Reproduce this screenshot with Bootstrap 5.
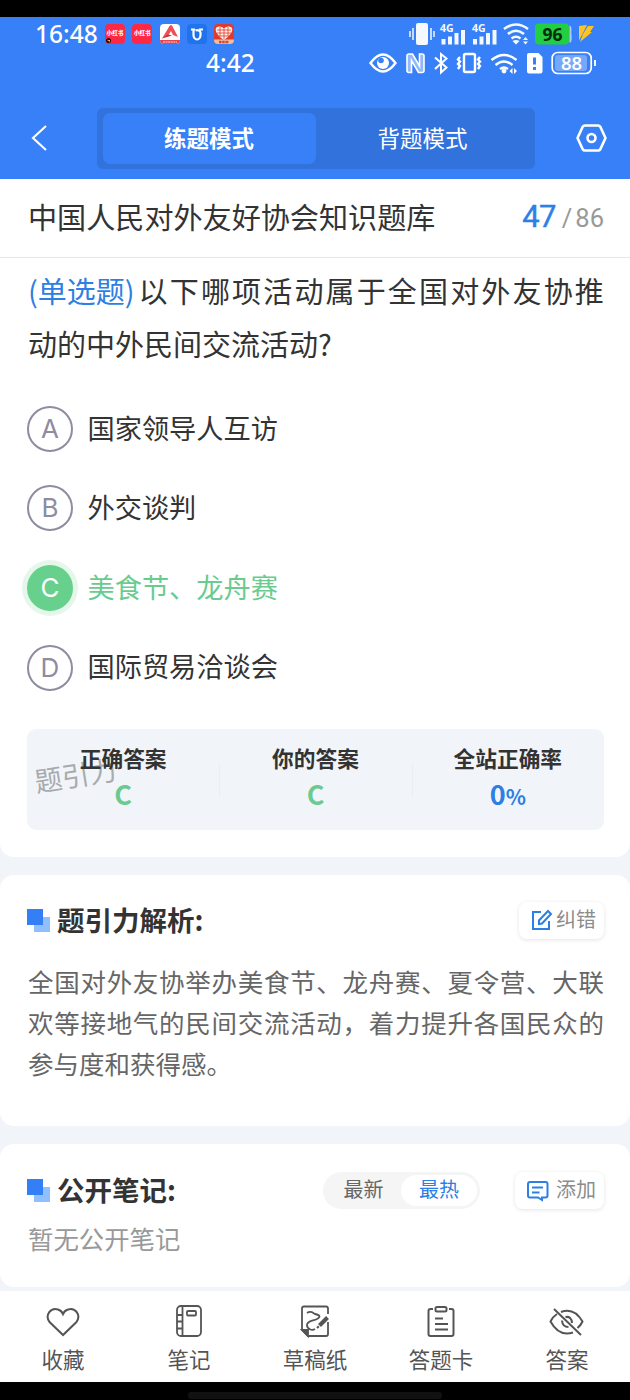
<!DOCTYPE html>
<html lang="zh-CN">
<head>
<meta charset="utf-8">
<meta name="viewport" content="width=device-width, initial-scale=1">
<title>题引力</title>
<link href="https://cdn.jsdelivr.net/npm/bootstrap@5.3.0/dist/css/bootstrap.min.css" rel="stylesheet">
<style>
body{font-family:"Noto Sans CJK SC",sans-serif;background:#f1f5f9;color:#333;line-height:1;height:1400px;overflow:hidden}
svg{display:block;flex:none;overflow:visible}
.notch{height:17px;background:#000}
.app-head{height:162px;background:#3880f7;color:#fff}
.status-row{font-family:"Noto Sans",sans-serif}
.row-one{height:34px;padding:0 35px}
.row-two{height:24px;padding:0 34px 0 206px}
.clock-a{font-size:24.5px;font-weight:500;width:62px;margin-right:8px}
.clock-b{font-size:24.5px;font-weight:500}
.app-ico{width:20px;height:20px;border-radius:4px;margin-right:7.3px;overflow:hidden}
.tool-row{margin-top:33px;height:60px;padding:0 23px 0 31px}
.seg{width:438px;height:61px;background:#3172dc;border-radius:6px;padding:5px 5px 5px 6px;left:4px}
.seg>div{font-size:22.5px;border-radius:7px;padding-bottom:2px}
.seg .on{background:#3880f7;font-weight:700;width:213px}
.title-row{height:79px;border-bottom:1px solid #e6e6e6;padding:0 26px 3px 28px;font-size:29.1px}
.count-now{font-family:Roboto,sans-serif;font-size:31px;letter-spacing:-.6px;color:#2d7fe8;-webkit-text-stroke:.4px #2d7fe8}
.count-all{font-family:Roboto,sans-serif;font-size:25.5px;color:#999}
.slash{margin:0 3px 0 6px}
.sheet{background:#fff}
.question{font-size:29px;line-height:52.6px;padding:6px 26px 0 28px;margin:0;height:131px}
.c-blue{color:#2d7fe3}
.c-green{color:#6acb90}
.opts{padding:0 27px}
.opt{height:79.6px;font-size:27.2px}
.opt .txt{padding-bottom:3px}
.letter{width:46px;height:46px;border:2px solid #8e8ca0;border-radius:50%;color:#8e8ca0;font-family:Inter,sans-serif;font-size:26px;margin-right:14.5px}
.letter.hit{background:#67d08d;border-color:#67d08d;color:#fff;box-shadow:0 0 0 5px #e5f7eb}
.stats{margin:21.6px 26px 0 27px;height:101px;background:#f1f5f9;border-radius:9px;padding-top:17px;position:relative}
.stats .lbl{font-size:21.7px;font-weight:700;line-height:24px}
.stats .val{font-size:27px;font-weight:700;line-height:36px;margin-top:6px;height:36px}
.stats .cell+.cell{background:linear-gradient(#eaeef2,#eaeef2) 0 18px/1px 34px no-repeat}
.stats .pct{font-size:21px}
.wm{left:7px;top:28px;font-size:27.5px;color:#a8abae;transform:rotate(-9deg);font-weight:400;line-height:34px}
.sheet-main{height:599px;border-radius:0 0 14px 14px}
.sheet-a{margin-top:18px;height:251px;border-radius:14px;padding:26px 26px 0 27px}
.sheet-b{margin-top:18px;height:143px;border-radius:14px;padding:27px 26px 0 27px}
.head-line{height:38px}
.sec{font-size:27.5px;font-weight:700;line-height:38px;margin:-3px 0 0 -1px}
.chip{height:37px;border-radius:8px;background:#fff;box-shadow:0 1px 4px rgba(0,0,0,.11);font-size:20px;color:#8c8c8c}
.chip span,.sort div{padding-bottom:2px}
.para{font-size:25.5px;line-height:41px;color:#666;text-align:justify;margin:21px 0 0 1px}
.sort{width:157px;height:37px;border-radius:19px;background:#f5f5f5;padding:3px;font-size:20px;color:#666;margin-right:35px}
.sort .on{width:76px;border-radius:17px;background:#fff;color:#2d7fe3}
.empty{font-size:25.4px;color:#999;margin:13px 0 0 1px;line-height:32px}
.dock{position:relative;margin-top:4px;height:91px;background:#fff;color:#555;font-size:21.5px}
.dock .item{width:126.2px;padding-top:12px;gap:9px}
.foot{height:18px;background:#000;padding-top:10px}
.foot div{width:254px;height:7px;border-radius:3px;background:#111}
.tiny{font-size:5.6px;font-weight:900;font-family:"Noto Sans CJK SC",sans-serif}
</style>
</head>
<body>
<div class="notch"></div>
<header class="app-head">
  <div class="status-row row-one d-flex align-items-center">
    <span class="clock-a text-nowrap">16:48</span>
    <span class="app-ico tiny d-flex align-items-center justify-content-center position-relative" style="background:#fd2843">小红书<svg class="position-absolute" style="left:1px;bottom:1px" width="5" height="5"><circle cx="2.5" cy="2.5" r="2.5" fill="#24100c"/><path d="M1 2h3v2z" fill="#f1b06b"/></svg></span>
    <span class="app-ico tiny d-flex align-items-center justify-content-center" style="background:#fd2843">小红书</span>
    <span class="app-ico"><svg width="20" height="20"><path d="M0 0h20v20H0z" fill="#fff"/><path d="M0 16h20v4H0z" fill="#e9444d"/><path d="M2 14.500 9.500 2q1.500-2 2.800 0L18 13l-5-2-2-4-3 5z" fill="#ef4d58"/><path d="m2 14.500 6-4 4 1z" fill="#c22b3c"/><path d="M3 18h14" stroke="#ffd9d9" stroke-dasharray="2 .6"/></svg></span>
    <span class="app-ico"><svg width="20" height="20"><path d="M0 0h20v20H0z" fill="#1f74ee"/><path d="M4 5.500h4M12 5.500h4M6.500 5v6a3.500 4.500 0 0 0 7 0V8.500a3.500 3 0 0 0-5-2" fill="none" stroke="#fff" stroke-width="2.200"/></svg></span>
    <span class="app-ico"><svg width="20" height="20"><path d="M0 0h20v20H0z" fill="#df3b2d"/><path d="M10 16C0 9 0 3 5 2.500q4 0 5 2.500 1-2.500 5-2.500c5 .5 5 6.500-5 13.500z" fill="#fff0e8"/><path d="M3 6h14M3 9h14M5 12h10M6 3v9M10 5v10M14 3v9" stroke="#df3b2d" stroke-width=".8"/><path d="M0 15.500h20V20H0z" fill="#f3bc9d"/><path d="M5 18h10" stroke="#d4452f" stroke-width="2.500" stroke-dasharray="2.500 .7"/></svg></span>
    <svg class="ms-auto" width="187" height="28" viewBox="408 20 187 28" fill="#f4f9ff">
      <rect x="416" y="23" width="12" height="22" rx="2"/><path d="M413 28v12M410 31v6M431 28v12M434 31v6" stroke="#f4f9ff" stroke-width="1.500"/>
      <text x="440" y="32" font-size="10.500" font-weight="700">4G</text><path d="M443.500 39v5.500M450 36.500v8M456.500 33v11.500M463 30v14.500" stroke="#f4f9ff" stroke-width="4"/>
      <text x="472" y="32" font-size="10.500" font-weight="700">4G</text><path d="M475 39v5.500M481.500 36.500v8M488 33v11.500M494.500 30v14.500" stroke="#f4f9ff" stroke-width="4"/>
      <path d="M504 29q12-9 24 0M508 34q8-6.500 16 0M511.500 38.500q4.500-3.500 9 0" fill="none" stroke="#f4f9ff" stroke-width="2.500"/><path d="m512.500 41 3.500 3.500 3.500-3.500q-3.500-2-7 0zM523 40l2.500-3 2.500 3zM523 41.500h5l-2.500 3z"/>
      <rect x="535" y="23.500" width="34" height="21" rx="4" fill="#23ce42"/><path d="M569.500 25.500c3 1 1.500 5 2 8.500 0 4 1 8-2 9z" fill="#b1cafa"/><text x="552.500" y="40.500" font-size="17.500" font-weight="700" fill="#052d09" text-anchor="middle">96</text>
      <path d="m579 26 8-1-4 8-4 7.500zM588 26h6l-4 6h2l-12 10 3-8z" fill="#fec421"/>
    </svg>
  </div>
  <div class="status-row row-two d-flex align-items-center">
    <span class="clock-b">4:42</span>
    <svg class="ms-auto" width="227" height="24" viewBox="368 51 227 24" fill="none" stroke="#fff" stroke-width="2.400">
      <path d="M369.500 63q12.500-17 25 0-12.500 17-25 0z"/><circle cx="382" cy="63" r="6" fill="#fff" stroke="none"/><circle cx="380" cy="60.500" r="2.800" fill="#3880f7" stroke="none"/>
      <path d="M408 54h3.500l7 12V54h2.500a2 2 0 0 1 2 2v14.500a2 2 0 0 1-2 2h-3.500l-7-12v12H408a2 2 0 0 1-2-2V56a2 2 0 0 1 2-2z" fill="#fff" fill-opacity=".45" stroke-width="1.600"/>
      <path d="m434 57.500 11.500 10-5.500 5V54l5.500 4.500L434 69" stroke-width="2"/>
      <rect x="463" y="54" width="11" height="18" rx="1.500"/><path d="m459 57-2 2.500 2 2-2 2.500 2 2-2 3M479 57l-2 2.500 2 2-2 2.500 2 2-2 3"/>
      <path d="M490.500 60q12.500-10 25 0M494.500 65q8.500-7 17 0M499 69q4-3 8 0"/><circle cx="503" cy="71" r="2" fill="#fff" stroke-width="1"/><path d="m511.500 68-3 3 3 3zM513 68l3 3-3 3z" fill="#fff" stroke="none"/>
      <path d="M528 53h9.500l4 4v14.500a2 2 0 0 1-2 2H528a2 2 0 0 1-2-2V55a2 2 0 0 1 2-2z" fill="#fff" stroke="none"/><path d="M533.500 57.500v7M533.500 67v3" stroke="#3880f7" stroke-width="3"/>
      <rect x="551.200" y="52.500" width="39" height="21" rx="5.500" stroke-width="1.700"/><rect x="554" y="55" width="32" height="16" rx="3" fill="#76a8f9" stroke="none"/><path d="M594 60v6" stroke-width="2"/><text x="570.500" y="69.500" text-anchor="middle" font-size="18.500" font-weight="600" fill="#fff" stroke="none">88</text>
    </svg>
  </div>
  <div class="tool-row d-flex align-items-center">
    <svg width="16" height="26" fill="none" stroke="#fff" stroke-width="2.100"><path d="M15 1 2 13l13 12"/></svg>
    <div class="seg d-flex ms-auto position-relative">
      <div class="on d-flex align-items-center justify-content-center">练题模式</div>
      <div class="flex-fill d-flex align-items-center justify-content-center">背题模式</div>
    </div>
    <svg class="ms-auto" width="31" height="28" fill="none" stroke="#fff" stroke-width="2.600" stroke-linejoin="round"><path d="M9 1.500h13q1.500 0 2.300 1.300L29.500 14l-5.200 11.200q-.8 1.300-2.300 1.300H9q-1.500 0-2.300-1.300L1.500 14 6.700 2.800Q7.500 1.500 9 1.500z"/><circle cx="15.500" cy="14" r="4"/></svg>
  </div>
</header>

<main>
  <section class="sheet">
    <div class="title-row d-flex align-items-center justify-content-between">
      <span>中国人民对外友好协会知识题库</span>
      <span class="d-flex align-items-baseline"><span class="count-now">47</span><span class="count-all slash">/</span><span class="count-all">86</span></span>
    </div>
  </section>
  <section class="sheet sheet-main">
    <div class="question">
      <div class="d-flex"><span class="c-blue">(单选题)</span><span class="d-flex flex-fill justify-content-between ms-1"><span>以</span><span>下</span><span>哪</span><span>项</span><span>活</span><span>动</span><span>属</span><span>于</span><span>全</span><span>国</span><span>对</span><span>外</span><span>友</span><span>协</span><span>推</span></span></div>
      <div>动的中外民间交流活动?</div>
    </div>
    <div class="opts">
      <div class="opt d-flex align-items-center"><span class="letter d-flex align-items-center justify-content-center">A</span><span class="txt">国家领导人互访</span></div>
      <div class="opt d-flex align-items-center"><span class="letter d-flex align-items-center justify-content-center">B</span><span class="txt">外交谈判</span></div>
      <div class="opt d-flex align-items-center c-green"><span class="letter hit d-flex align-items-center justify-content-center">C</span><span class="txt">美食节、龙舟赛</span></div>
      <div class="opt d-flex align-items-center"><span class="letter d-flex align-items-center justify-content-center">D</span><span class="txt">国际贸易洽谈会</span></div>
    </div>
    <div class="stats d-flex text-center">
      <span class="wm position-absolute">题引力</span>
      <div class="cell col-4 position-relative"><div class="lbl">正确答案</div><div class="val c-green">C</div></div>
      <div class="cell col-4"><div class="lbl">你的答案</div><div class="val c-green">C</div></div>
      <div class="cell col-4"><div class="lbl">全站正确率</div><div class="val c-blue">0<span class="pct">%</span></div></div>
    </div>
  </section>

  <section class="sheet sheet-a">
    <div class="head-line d-flex align-items-center">
      <svg class="me-2" width="23" height="23"><path d="M7 8h16v15H7z" fill="#8fbffc"/><path d="M0 0h16v16H0z" fill="#347ef6"/></svg>
      <span class="sec">题引力解析:</span>
      <span class="chip ms-auto d-flex align-items-center ps-2 pe-2"><svg class="ms-1 me-1" width="21" height="21" fill="none" stroke="#2d7fe3" stroke-width="2"><path d="M10 2H2v17h16v-8M8 14V10.500L17 1l3 3-9 9.500z"/></svg><span>纠错</span></span>
    </div>
    <p class="para">全国对外友协举办美食节、龙舟赛、夏令营、大联欢等接地气的民间交流活动，着力提升各国民众的参与度和获得感。</p>
  </section>

  <section class="sheet sheet-b">
    <div class="head-line d-flex align-items-center">
      <svg class="me-2" width="23" height="23"><path d="M7 8h16v15H7z" fill="#8fbffc"/><path d="M0 0h16v16H0z" fill="#347ef6"/></svg>
      <span class="sec">公开笔记:</span>
      <div class="sort d-flex ms-auto"><div class="flex-fill d-flex align-items-center justify-content-center">最新</div><div class="on d-flex align-items-center justify-content-center">最热</div></div>
      <span class="chip d-flex align-items-center ps-2 pe-2"><svg class="ms-1 me-2" width="21" height="21" fill="none" stroke="#2d7fe3" stroke-width="2"><path d="M3 2h15.500q2 0 2 2v11.500q0 2-2 2H15V20l-4-2.500H3q-2 0-2-2V4q0-2 2-2zM5 7.500h11M5 12.500h7.500"/></svg><span>添加</span></span>
    </div>
    <p class="empty">暂无公开笔记</p>
  </section>
</main>

<nav class="dock d-flex">
  <div class="item d-flex flex-column align-items-center"><svg width="36" height="36" fill="none" stroke="#555" stroke-width="2"><path d="M18 32 4.500 19C-.5 12 6 4 13 6.500q3.500 1 5 4.500 1.500-3.500 5-4.500C30 4 36.500 12 31.500 19z"/></svg>收藏</div>
  <div class="item d-flex flex-column align-items-center"><svg width="36" height="36" fill="none" stroke="#555" stroke-width="1.800"><rect x="6" y="3" width="24" height="30" rx="4"/><path d="M11.500 3v30M6 12h5.500M6 18.500h5.500M6 25.500h5.500"/><rect x="16" y="8" width="9" height="4.500" rx="1"/></svg>笔记</div>
  <div class="item d-flex flex-column align-items-center"><svg width="36" height="36" fill="none" stroke="#555" stroke-width="1.800"><path d="M31 11V5.500q0-2-2-2H7q-2 0-2 2V27l6 6h18q2 0 2-2V19"/><path d="M5 27h6v6z" fill="#555"/><path d="M10 10c4-3 6 0 8 1 5 1 6 3 2 5s-10 2-10 6 5 6 8 4"/><path d="m22.500 22.500 8-8" stroke-width="4"/><path d="m20 25 1.800-1.800" stroke-width="2"/></svg>草稿纸</div>
  <div class="item d-flex flex-column align-items-center"><svg width="36" height="36" fill="none" stroke="#555" stroke-width="2"><path d="M10 6H7.500q-2 0-2 2v23q0 2 2 2h21q2 0 2-2V8q0-2-2-2H26M12 15.500h8M12 21h13M12 26.500h13"/><rect x="12.500" y="4" width="11" height="4.500" rx="1.500"/></svg>答题卡</div>
  <div class="item d-flex flex-column align-items-center"><svg width="36" height="36" fill="none" stroke="#555" stroke-width="2"><path d="M5 6l27 26M12 9q13-5 21.500 9.500-1.500 3.500-5 6.500M24 29.500Q10 34 1.500 18.500 4 13.500 8 11"/><path d="M16.500 14q6-1 6.500 6M19.500 24q-6 0-6.500-6.500"/></svg>答案</div>
</nav>
<div class="foot"><div class="mx-auto"></div></div>
<script src="https://cdn.jsdelivr.net/npm/bootstrap@5.3.0/dist/js/bootstrap.bundle.min.js"></script>
</body>
</html>
